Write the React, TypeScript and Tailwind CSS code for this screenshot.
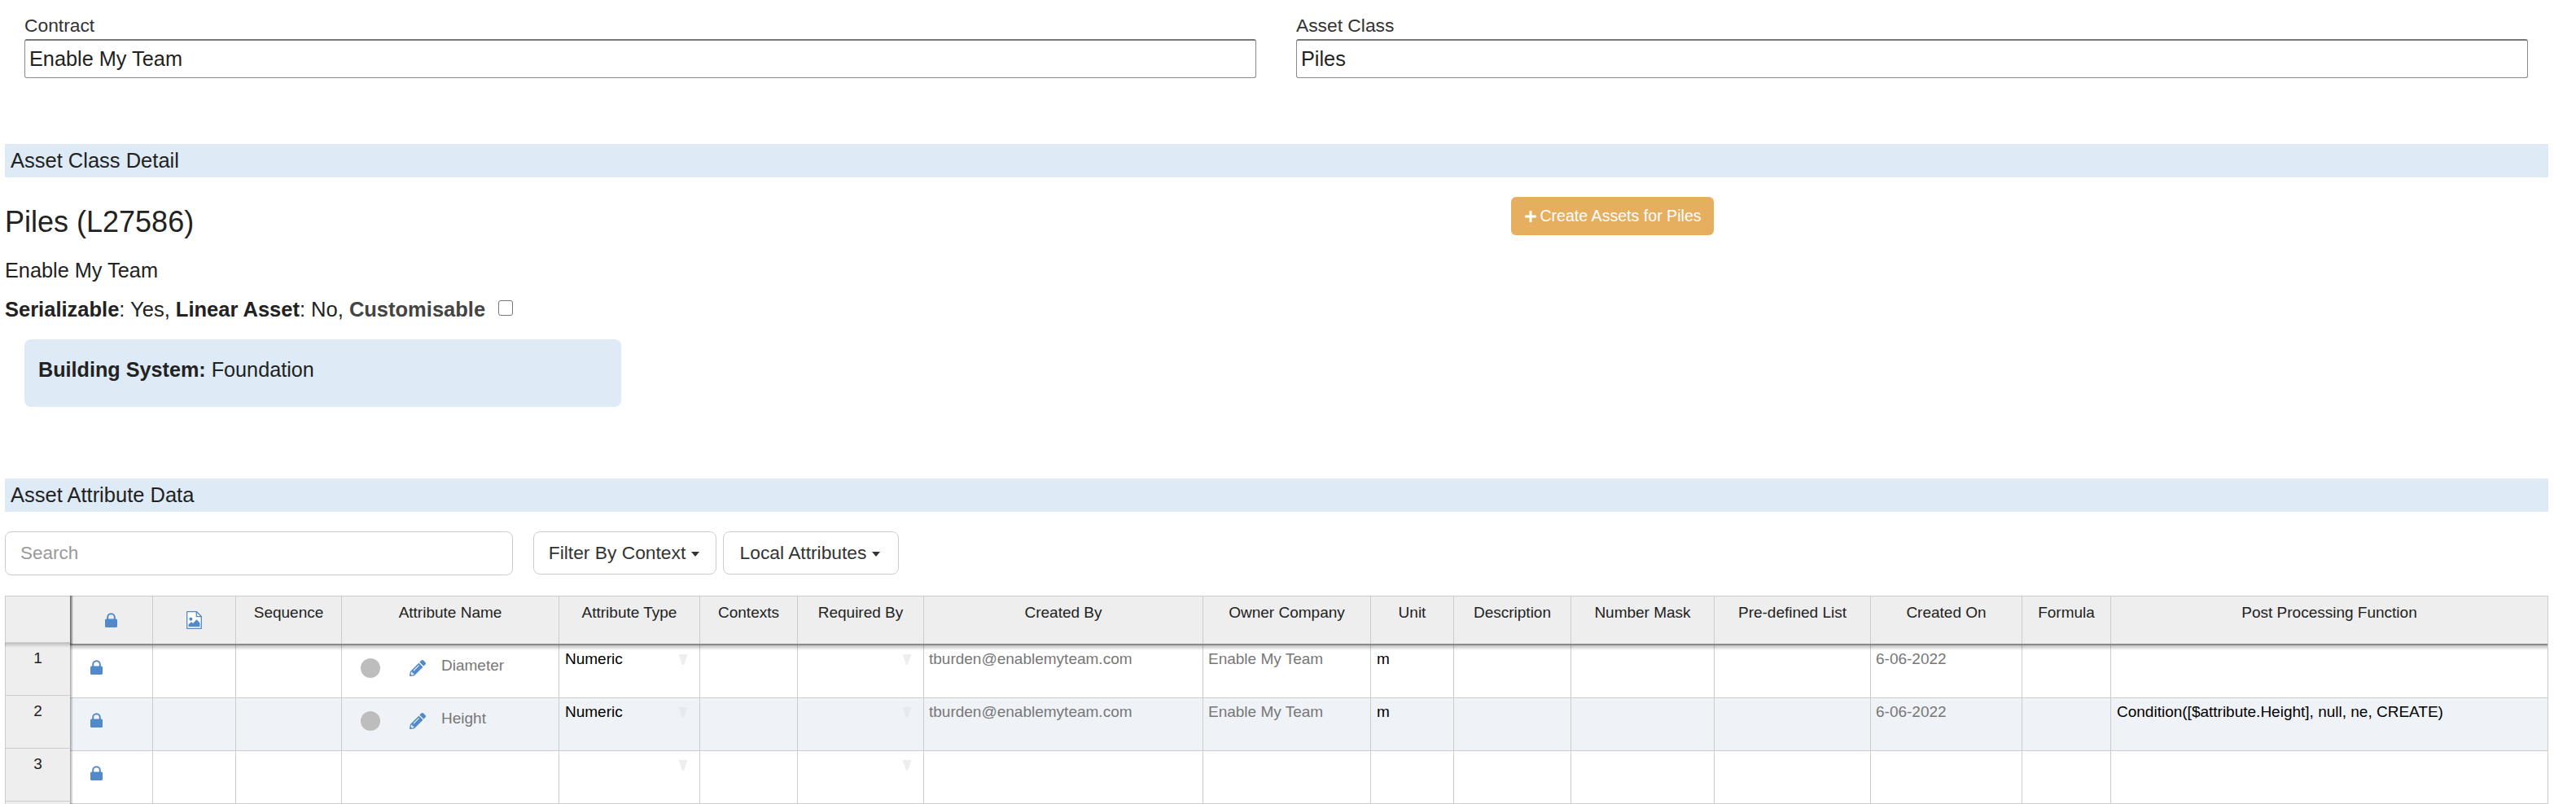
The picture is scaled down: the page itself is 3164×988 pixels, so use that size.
import React from "react";
import { FaPencilAlt, FaPlus } from "react-icons/fa";

const gridCols =
  "grid grid-cols-[102px_102px_130px_267px_173px_120px_155px_343px_206px_102px_144px_176px_192px_186px_109px_537px]";

function Lock() {
  return (
    <svg width="15" height="18" viewBox="0 0 15 18" className="block">
      <path d="M3.2 9V5.6a4.3 4.3 0 0 1 8.6 0V9" fill="none" stroke="#5189cb" strokeWidth="2" />
      <rect x="0" y="7.5" width="15" height="10.5" rx="1.6" fill="#5189cb" />
    </svg>
  );
}

function ImageFile() {
  return (
    <svg width="19" height="22" viewBox="0 0 19 22" className="block">
      <path d="M0.7 0.7H12.5L18.3 6.5V21.3H0.7Z" fill="#ffffff" stroke="#5189cb" strokeWidth="1.3" strokeLinejoin="round" />
      <path d="M12.3 1V6.7H18" fill="none" stroke="#5189cb" strokeWidth="1.3" />
      <circle cx="5.4" cy="9.8" r="2" fill="#5189cb" />
      <path d="M2.5 19.2V16.2L6 13.2L8 15L12.5 10.3L16.5 14.6V19.2Z" fill="#5189cb" />
    </svg>
  );
}

function Arrow({ color }: { color: string }) {
  return (
    <svg width="12" height="13" viewBox="0 0 12 13" className="absolute right-[14px] top-[11px]">
      <polygon points="0.5,0 11.5,0 7,13 5,13" fill={color} />
    </svg>
  );
}

function Caret() {
  return <span className="ml-[7px] mt-[2px] inline-block h-0 w-0 border-x-[5px] border-t-[6px] border-x-transparent border-t-[#333]" />;
}

function Band({ title }: { title: string }) {
  return <div className="h-[41px] bg-[#deebf6] pl-[7px] text-[25.5px] leading-[40px] text-[#222]">{title}</div>;
}

function Field({ label, value }: { label: string; value: string }) {
  return (
    <div className="w-[1513px]">
      <div className="h-[48px] pt-[18px] text-[22.8px] leading-[26px] text-[#333]">{label}</div>
      <div className="h-[48px] rounded-[3px] border border-[#8a8a8a] border-t-2 border-t-[#777] pl-[5px] text-[25.3px] leading-[44px] text-[#222]">{value}</div>
    </div>
  );
}

const headers = [
  "",
  "",
  "Sequence",
  "Attribute Name",
  "Attribute Type",
  "Contexts",
  "Required By",
  "Created By",
  "Owner Company",
  "Unit",
  "Description",
  "Number Mask",
  "Pre-defined List",
  "Created On",
  "Formula",
  "Post Processing Function",
];

function Cell({ children, className = "" }: { children?: React.ReactNode; className?: string }) {
  return <div className={`relative h-full min-w-0 border-r border-[#ccc] ${className}`}>{children}</div>;
}

function Txt({ children, gray }: { children: React.ReactNode; gray?: boolean }) {
  return (
    <div className={`whitespace-nowrap pt-[4px] text-[19px] leading-[26px] ${gray ? "pl-[6px] text-[#777]" : "pl-[7px] text-black"}`}>{children}</div>
  );
}

function Row({
  name,
  bg,
  arrow,
  filled,
  post,
}: {
  name?: string;
  bg: string;
  arrow: string;
  filled: boolean;
  post?: string;
}) {
  return (
    <div className={`${gridCols} h-[65px] border-b border-[#ccc] ${bg}`}>
      <Cell>
        <div className="pl-[25px] pt-[18px]">
          <Lock />
        </div>
      </Cell>
      <Cell />
      <Cell />
      <Cell>
        {name && (
          <div className="flex items-start pl-[23px] pt-[16px]">
            <span className="h-[24px] w-[24px] rounded-full bg-[#bdbdbd]" />
            <FaPencilAlt className="ml-[36px] mt-[2px] text-[#5189cb]" size={20} />
            <span className="-mt-[4px] ml-[19px] text-[19px] leading-[26px] text-[#777]">{name}</span>
          </div>
        )}
      </Cell>
      <Cell>
        {filled && <Txt>Numeric</Txt>}
        <Arrow color={arrow} />
      </Cell>
      <Cell />
      <Cell>
        <Arrow color={arrow} />
      </Cell>
      <Cell>{filled && <Txt gray>tburden@enablemyteam.com</Txt>}</Cell>
      <Cell>{filled && <Txt gray>Enable My Team</Txt>}</Cell>
      <Cell>{filled && <Txt>m</Txt>}</Cell>
      <Cell />
      <Cell />
      <Cell />
      <Cell>{filled && <Txt gray>6-06-2022</Txt>}</Cell>
      <Cell />
      <Cell>{post && <Txt>{post}</Txt>}</Cell>
    </div>
  );
}

export default function App() {
  return (
    <div className="h-[988px] w-[3164px] overflow-hidden bg-white pl-[6px] pr-[34px] font-['Liberation_Sans',Arial,sans-serif]">
      <div className="flex gap-[49px] pl-[24px]">
        <Field label="Contract" value="Enable My Team" />
        <Field label="Asset Class" value="Piles" />
      </div>

      <div className="mt-[81px]">
        <Band title="Asset Class Detail" />
      </div>

      <div className="flex">
        <div className="w-[1850px]">
          <h1 className="mt-[34px] text-[36px] leading-[42px] text-[#222]">Piles (L27586)</h1>
          <div className="mt-[23px] text-[25.3px] leading-[30px] text-[#222]">Enable My Team</div>
          <div className="mt-[18px] flex items-center text-[25.5px] leading-[30px] text-[#222]">
            <span>
              <b>Serializable</b>: Yes, <b>Linear Asset</b>: No, <b className="text-[#444]">Customisable</b>
            </span>
            <span className="ml-[16px] -mt-[3px] h-[19px] w-[18px] rounded-[3px] border border-[#767676] bg-white" />
          </div>
          <div className="ml-[24px] mt-[22px] h-[83px] w-[733px] rounded-[8px] bg-[#deebf6] pl-[17px] pt-[22px] text-[25.2px] leading-[30px] text-[#222]">
            <b>Building System:</b> Foundation
          </div>
        </div>
        <button className="mt-[24px] flex h-[47px] w-[249px] items-center justify-center rounded-[6px] bg-[#e6ae5f] pl-[1px] text-[19.6px] text-white">
          <FaPlus size={16} className="mr-[3px]" />
          Create Assets for Piles
        </button>
      </div>

      <div className="mt-[88px]">
        <Band title="Asset Attribute Data" />
      </div>

      <div className="mt-[24px] flex">
        <div className="flex h-[54px] w-[624px] items-center rounded-[8px] border border-[#ccc] pl-[18px] text-[22.5px] text-[#999]">Search</div>
        <div className="ml-[25px] flex h-[53px] w-[225px] items-center justify-center rounded-[8px] border border-[#ccc] pr-[2px] text-[22.8px] text-[#333]">
          Filter By Context
          <Caret />
        </div>
        <div className="ml-[8px] flex h-[53px] w-[216px] items-center justify-center rounded-[8px] border border-[#ccc] pr-[2px] text-[22.8px] text-[#333]">
          Local Attributes
          <Caret />
        </div>
      </div>

      <div className="relative mt-[25px] flex h-[256px] w-[3124px] overflow-hidden">
        {/* row headers */}
        <div className="w-[80px] shrink-0 border-l border-[#ccc] bg-[#eeeeee] text-center text-[19px] text-[#222]">
          <div className="h-[58px] border-b border-t border-[#ccc]" />
          {[1, 2, 3].map((n) => (
            <div key={n} className="h-[65px] border-b border-[#ccc] pt-[6px] leading-[26px]">
              {n}
            </div>
          ))}
        </div>

        {/* main table */}
        <div className="relative min-w-0 flex-1 border-r border-[#ccc]">
          <div className={`${gridCols} h-[61px] border-b-2 border-t border-b-[#8a8a8a] border-t-[#ccc] bg-[#eeeeee]`}>
            {headers.map((h, i) => (
              <Cell key={i}>
                {i === 0 && (
                  <div className="flex justify-center pt-[20px]">
                    <Lock />
                  </div>
                )}
                {i === 1 && (
                  <div className="flex justify-center pt-[18px]">
                    <ImageFile />
                  </div>
                )}
                {h && <div className="whitespace-nowrap pt-[7px] text-center text-[19px] leading-[26px] text-[#222]">{h}</div>}
              </Cell>
            ))}
          </div>
          <Row name="Diameter" bg="bg-white" arrow="#eeeeee" filled />
          <Row
            name="Height"
            bg="bg-[#eff2f7]"
            arrow="#e6e9ee"
            filled
            post="Condition([$attribute.Height], null, ne, CREATE)"
          />
          <Row bg="bg-white" arrow="#eeeeee" filled={false} />
          {/* scroll shadow under the frozen header */}
          <div className="absolute left-0 right-0 top-[61px] h-[6px] bg-gradient-to-b from-[#00000040] to-transparent" />
          {/* scroll shadow beside the frozen row headers */}
          <div className="absolute bottom-0 left-0 top-0 w-[4px] bg-gradient-to-r from-[#00000055] to-transparent" />
          <div className="absolute left-0 top-0 h-[60px] w-[4px] bg-gradient-to-r from-[#00000060] to-transparent" />
        </div>

        {/* shadow under the corner cell */}
        <div className="absolute left-0 top-[58px] h-[6px] w-[80px] bg-gradient-to-b from-[#00000033] to-transparent" />
      </div>
    </div>
  );
}
